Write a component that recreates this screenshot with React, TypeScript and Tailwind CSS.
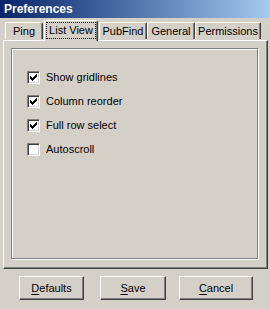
import React from "react";

const font = { fontFamily: '"Liberation Sans", Arial, sans-serif' };

const checkRows = [
  "......X",
  ".....XX",
  "X...XXX",
  "XX.XXX.",
  "XXXXX..",
  ".XXX...",
  "..X....",
];

function CheckMark() {
  const rects: React.ReactElement[] = [];
  checkRows.forEach((row, y) =>
    row.split("").forEach((c, x) => {
      if (c === "X") rects.push(<rect key={`${x}-${y}`} x={x} y={y} width="1" height="1" fill="#000" />);
    })
  );
  return (
    <svg width="7" height="7" viewBox="0 0 7 7" shapeRendering="crispEdges">
      {rects}
    </svg>
  );
}

function Check({ checked, label }: { checked: boolean; label: string }) {
  return (
    <div className="flex items-center h-[13px] gap-[6px]">
      <div className="w-[13px] h-[13px] bg-white border-t border-l border-[#808080] border-r border-b border-r-white border-b-white shadow-[inset_1px_1px_0_#404040,inset_-1px_-1px_0_#d4d0c8] flex items-center justify-center">
        {checked && <CheckMark />}
      </div>
      <span className="text-[11px] leading-[13px] text-black">{label}</span>
    </div>
  );
}

function Btn({ w, ml, u, rest }: { w: string; ml: string; u: string; rest: string }) {
  return (
    <div
      className={`${w} ${ml} h-[24px] bg-[#d4d0c8] border-t border-l border-white border-r border-b border-r-[#404040] border-b-[#404040] shadow-[inset_-1px_-1px_0_#808080] flex items-center justify-center text-[11px] text-black`}
    >
      <span>
        <span className="underline underline-offset-[2px]">{u}</span>
        {rest}
      </span>
    </div>
  );
}

export default function App() {
  const tabs = [
    { label: "Ping", w: "w-[38px]" },
    { label: "List View", w: "w-[54px]", sel: true },
    { label: "PubFind", w: "w-[48px]" },
    { label: "General", w: "w-[48px]" },
    { label: "Permissions", w: "w-[66px]" },
  ];
  return (
    <div className="w-[270px] h-[309px] bg-[#d4d0c8] flex flex-col" style={font}>
      <div className="h-[18px] bg-gradient-to-r from-[#0a246a] to-[#a6caf0] flex items-center pl-[4px]">
        <span className="text-white font-bold text-[12px] leading-[14px]">Preferences</span>
      </div>
      <div className="h-[21px] mt-[1px] flex items-end pl-[5px] relative z-10">
        {tabs.map((t) =>
          t.sel ? (
            <div
              key={t.label}
              className={`${t.w} h-[21px] -mb-px mx-[1px] bg-[#d4d0c8] border-t border-l border-white border-r border-r-[#404040] rounded-t-[2px] shadow-[inset_-1px_0_0_#808080] flex items-start justify-center pt-[2px]`}
            >
              <span className="text-[11px] leading-[13px] px-[2px] py-[1px] outline-1 outline-dotted outline-black">
                {t.label}
              </span>
            </div>
          ) : (
            <div
              key={t.label}
              className={`${t.w} h-[17px] mb-[1px] bg-[#d4d0c8] border-t border-l border-white border-r border-r-[#404040] rounded-t-[2px] shadow-[inset_-1px_0_0_#808080] flex items-start justify-center pt-[2px]`}
            >
              <span className="text-[11px] leading-[13px] text-black">{t.label}</span>
            </div>
          )
        )}
      </div>
      <div className="ml-[3px] w-[265px] h-[229px] border-t border-l border-white border-r border-b border-r-[#404040] border-b-[#404040] shadow-[inset_-1px_-1px_0_#808080] pt-[7px] pl-[7px]">
        <div className="w-[247px] h-[211px] border border-[#808080] shadow-[1px_1px_0_#fff,inset_1px_1px_0_#fff] pt-[22px] pl-[15px] flex flex-col gap-[11px]">
          <Check checked label="Show gridlines" />
          <Check checked label="Column reorder" />
          <Check checked label="Full row select" />
          <Check checked={false} label="Autoscroll" />
        </div>
      </div>
      <div className="flex mt-[7px]">
        <Btn w="w-[65px]" ml="ml-[19px]" u="D" rest="efaults" />
        <Btn w="w-[66px]" ml="ml-[16px]" u="S" rest="ave" />
        <Btn w="w-[74px]" ml="ml-[13px]" u="C" rest="ancel" />
      </div>
    </div>
  );
}
